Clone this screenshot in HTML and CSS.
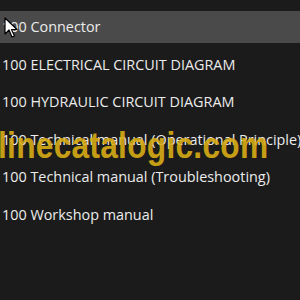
FILE: index.html
```html
<!DOCTYPE html>
<html>
<head>
<meta charset="utf-8">
<link rel="stylesheet" href="styles.css">
</head>
<body>
<ul class="list">
  <li class="row selected">100 Connector</li>
  <li class="row">100 ELECTRICAL CIRCUIT DIAGRAM</li>
  <li class="row">100 HYDRAULIC CIRCUIT DIAGRAM</li>
  <li class="row">100 Technical manual (Operational Principle)</li>
  <li class="row">100 Technical manual (Troubleshooting)</li>
  <li class="row">100 Workshop manual</li>
</ul>
<div class="watermark">linecatalogic.com</div>
<svg class="cursor" width="14" height="22" viewBox="0 0 14 22">
  <path d="M1 1 L1 17 L5 13 L8 20 L10.5 19 L7.5 12.5 L13 12.5 Z" fill="#fff" stroke="#000" stroke-width="1.2" stroke-linejoin="round"/>
</svg>
</body>
</html>
```
FILE: styles.css
```css
html, body {
  margin: 0;
  padding: 0;
  background: #1b1b1b;
  width: 300px;
  height: 300px;
  overflow: hidden;
}
body {
  position: relative;
  font-family: "Open Sans", "Noto Sans", sans-serif;
}
.list {
  list-style: none;
  margin: 0;
  padding: 11px 0 0 0;
  display: flex;
  flex-direction: column;
  gap: 5.5px;
}
.row {
  height: 32px;
  line-height: 32px;
  padding-left: 2px;
  color: #ececec;
  font-size: 14.4px;
  white-space: nowrap;
}
.row.selected {
  background: #4a4a4a;
}
.watermark {
  position: absolute;
  left: -2px;
  top: 125px;
  font-family: "Liberation Sans", Arial, sans-serif;
  font-weight: bold;
  font-size: 36px;
  color: #d9ad16;
  opacity: 0.9;
  letter-spacing: 0.3px;
  white-space: nowrap;
  transform: scaleX(0.88);
  transform-origin: left top;
}
.cursor {
  position: absolute;
  left: 4px;
  top: 17px;
}
```
